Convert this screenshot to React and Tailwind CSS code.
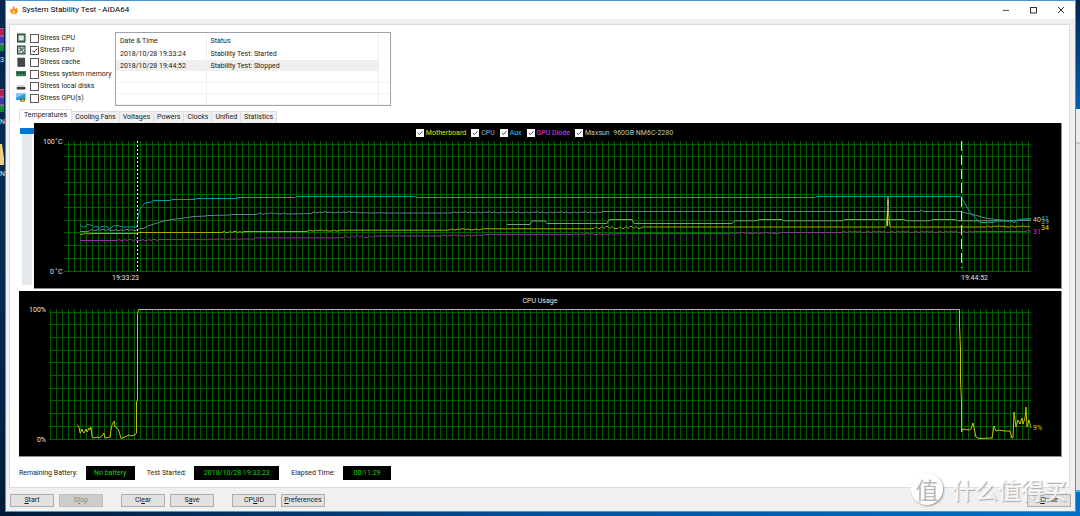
import React from "react";

const STRESS_ITEMS = [
  { id: "cpu", label: "Stress CPU", icon: "chip" },
  { id: "fpu", label: "Stress FPU", icon: "fpu", checked: true },
  { id: "cache", label: "Stress cache", icon: "cache" },
  { id: "memory", label: "Stress system memory", icon: "memory" },
  { id: "disks", label: "Stress local disks", icon: "disk" },
  { id: "gpu", label: "Stress GPU(s)", icon: "gpu" },
];

const LOG = [
  ["2018/10/28 19:33:24", "Stability Test: Started"],
  ["2018/10/28 19:44:52", "Stability Test: Stopped"],
];

const TABS = ["Temperatures", "Cooling Fans", "Voltages", "Powers", "Clocks", "Unified", "Statistics"];

const SENSORS = [
  { id: "mb", label: "Motherboard", color: "text-[#e0e000]" },
  { id: "cpu", label: "CPU", color: "text-[#9fb3cd]" },
  { id: "aux", label: "Aux", color: "text-[#00dce4]" },
  { id: "gpu", label: "GPU Diode", color: "text-[#e838e8]" },
  { id: "ssd", label: "Maxsun  960GB NM6C-2280", color: "text-[#b9c8b4]" },
];

const PATTERN = [0, 1, 0, 0, 1, 0, 1, 1, 0, 1, 0, 0];

function wobble(from, to, y, amp = 1) {
  const points = [];
  for (let x = from, i = 0; x <= to; x += 2, i += 1) {
    points.push([x, y - PATTERN[i % PATTERN.length] * amp]);
  }
  return points;
}

const AUX = [
  [80, 225], [83, 227], [85, 227], [87, 224.5], [91, 225], [94, 227], [98, 226.5], [99, 229], [101, 226.5], [108, 227],
  [110, 229.5], [113, 226], [118, 225.5], [122, 227], [137, 227], [138, 217], [140, 209], [145, 203], [152, 202], [153, 200.5],
  [170, 200.5], [172, 199.5], [195, 199.5], [197, 198.5], [236, 198.5], [238, 197.5], [295, 197.5], [296, 196.5], [415, 196.5],
  [416, 197.5], [815, 197.5], [816, 196.5], [961, 196.5], [964, 202], [968, 209], [971, 214], [975, 217], [978, 221], [980, 222.5],
  [994, 222.5], [996, 221], [1012, 221], [1014, 223], [1017, 220], [1024, 219], [1031, 218.5],
];

const CPU = [
  [80, 231.5], [88, 231.5], ...wobble(90, 137, 230.5), [140, 228.5], [143, 228.5], [148, 226], [154, 224], [162, 221.5], [172, 219.5],
  [184, 218], [194, 216.5], [206, 216], [208, 215.5], [230, 215], [232, 214.5], [256, 214.5], ...wobble(258, 288, 214),
  [312, 213.5], ...wobble(312, 357, 212.8), [380, 213], [381, 212], [382, 213], [451, 213], ...wobble(452, 600, 212.8), [602, 211.5],
  [920, 211.5], [921, 210], [923, 211.5], [961, 211.5], [966, 213], [975, 215], [985, 218], [996, 219.5], [1008, 220.5], [1031, 220.5],
];

const MOTHERBOARD = [
  [80, 234.5], [84, 234], [86, 233], [88, 234], [91, 233.5], [137, 233.5], [139, 232.5], [220, 232.5], ...wobble(222, 242, 232.5),
  [244, 231.5], [306, 231.5], ...wobble(308, 338, 231), [340, 230.2], [448, 230.2], ...wobble(450, 482, 229.8), [484, 228.8],
  [592, 228.8], ...wobble(594, 640, 228.5, 2), [642, 227], [886, 227], [888, 208], [890, 227], [984, 227], ...wobble(986, 1031, 227),
];

const GPU = [
  [80, 240.5], [115, 240.5], ...wobble(117, 160, 240.5), [162, 239.5], [254, 239], [256, 237.8], [342, 237.8], ...wobble(344, 372, 237.6, 2),
  [374, 236], [440, 236], ...wobble(442, 482, 236), [484, 234.6], [572, 234.6], ...wobble(574, 616, 234.5), [618, 233.6], [728, 233.6],
  ...wobble(730, 778, 233.6), [780, 232.6], [840, 232.6], ...wobble(842, 976, 232.3), [978, 231.5], [1025, 231.5], [1028, 230.5], [1031, 231.5],
];

const MAXSUN = [
  [507, 224.5], [530, 224.5], [532, 221], [545, 221], [547, 223.5], [607, 223.5], [609, 219.5], [632, 219.5], [634, 223.5],
  [732, 223.5], [735, 220.8], [757, 220.8], [759, 219.5], [782, 219.5], [784, 220.8], [842, 220.8], [845, 219.5], [904, 219.5],
  [907, 220.8], [930, 220.8], [932, 219.5], [955, 219.5], [958, 220.8], [1017, 220.8], [1020, 220], [1031, 220],
];

const USAGE = [
  [77, 424.5], [79, 427], [80, 433], [81, 432], [82, 429], [83, 432], [84, 433], [86, 429], [87, 432], [89, 428], [90, 430], [91, 427],
  [92, 437], [94, 438], [98, 437], [99, 438], [102, 436], [104, 433], [105, 438], [110, 437], [111, 430], [112, 425], [114, 421],
  [115, 427], [117, 427.5], [119, 431], [121, 438.5], [125, 437], [129, 435], [131, 436], [135, 435], [136.5, 433], [136.5, 402],
  [137.5, 400], [137.5, 314], [138.5, 309.5], [959.5, 309.5], [959.5, 325], [960.5, 350], [960.5, 380], [961.5, 402], [961.5, 432],
  [963, 429], [969, 430], [971, 429], [973, 423], [976, 437], [979, 438.5], [992, 438], [994, 426], [996, 431], [999, 430], [1004, 431],
  [1010, 431], [1012, 438], [1013, 438], [1014, 412], [1016, 427], [1018, 420], [1020, 424], [1022, 418], [1023, 424], [1025, 418],
  [1026, 407], [1027, 427], [1029, 420], [1031, 428],
];

const toPoints = (points) => points.map((p) => p.join(",")).join(" ");

function Trace({ points, color }) {
  return <polyline points={toPoints(points)} fill="none" stroke={color} strokeWidth="1" />;
}

function Grid({ left, right, top, bottom, firstColumn, firstRow }) {
  const columns = [];
  for (let x = firstColumn; x <= right; x += 6) {
    columns.push(<line key={x} x1={x + 0.5} x2={x + 0.5} y1={top} y2={bottom} />);
  }
  const rows = [];
  const step = (bottom - 1 - firstRow) / 10;
  for (let i = 0; i <= 10; i += 1) {
    const y = Math.floor(firstRow + step * i) + 0.5;
    rows.push(<line key={i} x1={left} x2={right} y1={y} y2={y} />);
  }
  return (
    <g strokeWidth="1" shapeRendering="crispEdges">
      <g stroke="#005e00">{columns}</g>
      <g stroke="#006000">{rows}</g>
    </g>
  );
}

const chartText = "font-[Roboto,'Open_Sans',sans-serif] text-[7px]";

function TemperatureChart() {
  return (
    <svg viewBox="34 138 1027 150" className={"block w-full overflow-visible " + chartText} role="img" aria-label="Temperature history">
      <Grid left={64} right={1031} top={141} bottom={272} firstColumn={68} firstRow={144} />
      <Trace points={GPU} color="#96309a" />
      <Trace points={MAXSUN} color="#7f9c7a" />
      <Trace points={CPU} color="#6a7e98" />
      <Trace points={MOTHERBOARD} color="#acac00" />
      <Trace points={AUX} color="#009ca2" />
      <path d="M888 197V213" stroke="#a8a8b8" strokeWidth="1.4" />
      <path d="M888 200V206M887.5 211V226" stroke="#d0d040" strokeWidth="1.2" />
      <path d="M137.5 141V271" stroke="#ffffff" strokeDasharray="2 2" />
      <path d="M961.5 141V268" stroke="#d8d8d8" strokeDasharray="10 4" />
      <g fill="#e4e4e4">
        <text x="43" y="144">100</text>
        <text x="55" y="143">°</text>
        <text x="58" y="144">C</text>
        <text x="50" y="274">0</text>
        <text x="55" y="273">°</text>
        <text x="58" y="274">C</text>
        <text x="112" y="280">19:33:23</text>
        <text x="961" y="280">19:44:52</text>
        <text x="1033" y="222" fill="#c4d0c0">40</text>
        <text x="1041" y="224" fill="#8fa3bd">39</text>
        <text x="1041" y="221" fill="#00c4cc">41</text>
        <text x="1041" y="230" fill="#e0e000">34</text>
        <text x="1033" y="234" fill="#d838d8">31</text>
      </g>
    </svg>
  );
}

function UsageChart() {
  return (
    <svg viewBox="19 306 1042 150" className={"block w-full " + chartText} role="img" aria-label="CPU usage history">
      <Grid left={49} right={1031} top={309} bottom={440} firstColumn={50} firstRow={312} />
      <Trace points={USAGE} color="#c4c400" />
      <text x="46" y="312" textAnchor="end" fill="#e4e4e4">100%</text>
      <text x="46" y="442" textAnchor="end" fill="#e4e4e4">0%</text>
      <text x="1033" y="430" fill="#d8d800">9%</text>
    </svg>
  );
}

function CheckBox({ id, checked, small }) {
  return (
    <span className={small ? "relative block h-[8px] w-[8px]" : "relative block h-[9px] w-[9px]"}>
      <input
        id={id}
        type="checkbox"
        defaultChecked={checked}
        className={
          small
            ? "peer block h-[8px] w-[8px] appearance-none bg-white"
            : "peer block h-[9px] w-[9px] appearance-none border border-[#5a5a5a] bg-white"
        }
      />
      <svg
        viewBox="0 0 9 9"
        className="pointer-events-none absolute inset-0 hidden h-full w-full peer-checked:block"
        fill="none"
        stroke="#333"
      >
        <path d="M2 4.5L3.8 6.3L7.2 2.6" />
      </svg>
    </span>
  );
}

function StressIcon({ name }) {
  return (
    <svg viewBox="0 0 10 10" className="h-[10px] w-[10px] shrink-0">
      {name === "chip" && (
        <>
          <rect x="1" y="0.5" width="8.5" height="9" fill="#1d4f35" />
          <rect x="2.5" y="2.2" width="5.5" height="5.5" fill="#e4ece6" stroke="#7f9a88" strokeWidth="0.8" />
        </>
      )}
      {name === "fpu" && (
        <>
          <rect x="1" y="0.5" width="8.5" height="9" fill="#2a4a3c" />
          <rect x="2.2" y="1.8" width="6.2" height="6.4" fill="#c8d4cc" />
          <path d="M3 3h2v2h2M6 3.2h1.8M3.2 6.5l2-1.5M6 7.2h2" stroke="#2a4a3c" fill="none" strokeWidth="0.9" />
        </>
      )}
      {name === "cache" && (
        <>
          <rect x="1.5" y="0.8" width="7.5" height="9" fill="#3a3e40" />
          <path d="M1 2.2h8.4M1 4h8.4M1 5.8h8.4M1 7.6h8.4" stroke="#5a6062" strokeWidth="0.6" />
          <path d="M3.4 0v1.5M7 0v1.5" stroke="#8a8e90" />
        </>
      )}
      {name === "memory" && (
        <>
          <rect x="0" y="2" width="10" height="5" fill="#2f7d50" />
          <path d="M1.5 3h1.5v2H1.5zM4.2 3h1.5v2H4.2zM7 3h1.5v2H7z" fill="#174028" />
          <path d="M0.5 7.4h9" stroke="#9fc0a8" strokeWidth="0.8" strokeDasharray="1 0.5" />
        </>
      )}
      {name === "disk" && (
        <>
          <path d="M2 4h6l1.5 2.5h-9z" fill="#d4d4d4" />
          <rect x="0.8" y="6" width="8.6" height="2.4" rx="0.5" fill="#3c3c3c" />
        </>
      )}
      {name === "gpu" && (
        <>
          <rect x="0" y="0.5" width="9.5" height="6.5" fill="#2f9be0" />
          <path d="M0 0.5h9.5L0 5z" fill="#7cc8f4" />
          <rect x="4" y="5.4" width="5" height="3" fill="#3c7a4a" />
          <circle cx="6.8" cy="7.6" r="1.6" fill="#d8a020" />
        </>
      )}
    </svg>
  );
}

function Readout({ label, value, className }) {
  return (
    <div className="flex items-center gap-[8px]">
      <span>{label}</span>
      <output className={"flex h-[14px] items-center justify-center bg-black text-[#00dc00] " + className}>{value}</output>
    </div>
  );
}

function Button({ before = "", hot, after = "", disabled }) {
  return (
    <button
      type="button"
      disabled={disabled}
      className="flex h-[13px] w-[44px] items-center justify-center border border-[#adadad] bg-[#e1e1e1] whitespace-pre disabled:border-[#bfbfbf] disabled:bg-[#cccccc] disabled:text-[#8a8a8a]"
    >
      {before}
      <span className="underline underline-offset-1">{hot}</span>
      {after}
    </button>
  );
}

function TitleBar() {
  return (
    <header className="flex h-[18px] items-center justify-between bg-white pr-[10px] pl-[4px]">
      <div className="flex items-center gap-[4px]">
        <svg viewBox="0 0 9 10" className="h-[10px] w-[8px]">
          <path d="M4.2 0C5 2 5.4 3 5.6 4.2C6.6 3.6 7 3 7.2 2.2C8.6 4 9 5.6 8.2 7.4C7.4 9.2 5.8 10 4.2 9.8C2 9.6 0.2 8 0.2 5.6C0.2 4.6 0.4 4 0.8 3.2C1.4 4 1.8 4.4 2.6 4.6C2.8 3 3.4 1.6 4.2 0Z" fill="#f58a1f" />
          <path d="M4.4 4.6C5 6 6.4 6.4 6 8C5.6 9.2 3.2 9.4 2.6 8C2.2 7 3.6 6 4.4 4.6Z" fill="#ffd54a" />
        </svg>
        <h1 className="text-[8px] leading-[12px] text-black">System Stability Test - AIDA64</h1>
      </div>
      <div className="flex items-center gap-[20px]">
        <button type="button" aria-label="Minimize">
          <svg viewBox="0 0 8 8" className="h-[8px] w-[7px]" stroke="#333" fill="none">
            <path d="M1 4.5h7" />
          </svg>
        </button>
        <button type="button" aria-label="Maximize">
          <svg viewBox="0 0 8 8" className="h-[8px] w-[8px]" stroke="#333" fill="none">
            <rect x="1.5" y="1.5" width="6" height="5.5" />
          </svg>
        </button>
        <button type="button" aria-label="Close window">
          <svg viewBox="0 0 8 8" className="h-[8px] w-[8px]" stroke="#333" fill="none">
            <path d="M1 1L7 7M7 1L1 7" />
          </svg>
        </button>
      </div>
    </header>
  );
}

function EventLog() {
  const cell = "border-r border-[#efefef] px-[4px] text-left font-normal";
  return (
    <div className="w-[276px] border border-[#a0a4aa] bg-white">
      <table className="w-full table-fixed border-collapse">
        <colgroup>
          <col className="w-[90px]" />
          <col />
          <col className="w-[12px]" />
        </colgroup>
        <thead>
          <tr className="h-[15px]">
            <th className={cell}>Date &amp; Time</th>
            <th className={cell}>Status</th>
            <td />
          </tr>
        </thead>
        <tbody>
          {LOG.map(([time, status], i) => (
            <tr key={time} className={i === 1 ? "h-[11px] bg-[#efefef]" : "h-[12px]"}>
              <td className={cell}>{time}</td>
              <td className={cell}>{status}</td>
              <td className={i === 1 ? "bg-white" : ""} />
            </tr>
          ))}
          {[0, 1, 2].map((i) => (
            <tr key={i} className="h-[11px] border-b border-[#f3f3f3]">
              <td className={cell} />
              <td className={cell} />
              <td />
            </tr>
          ))}
        </tbody>
      </table>
    </div>
  );
}

function DesktopArchive() {
  return (
    <svg viewBox="0 0 5 24" className="h-[24px] w-[5px]">
      <rect y="0" width="4" height="8" fill="#b02050" />
      <rect y="8" width="4" height="8" fill="#4038b0" />
      <rect y="16" width="4" height="7" fill="#108a30" />
      <path d="M0 0h4M0 8h4M0 16h4" stroke="#e8a0c0" strokeWidth="0.7" />
    </svg>
  );
}

export default function App() {
  return (
    <div className="relative flex min-h-screen flex-col bg-linear-to-r from-[#021a38] via-[#04509c] to-[#0070c8] font-[Roboto,'Open_Sans',sans-serif] text-[7px] leading-[10px] text-[#1a1a1a]">
      <div className="flex">
        <aside className="w-[5px] shrink-0 overflow-hidden bg-linear-to-b from-[#04264f] via-[#062c54] to-[#021a38] pt-[28px] text-[#dfe6ee]">
          <DesktopArchive />
          <p className="pt-[3px] pb-[24px]">3</p>
          <DesktopArchive />
          <p className="pt-[4px] pb-[17px]">N</p>
          <svg viewBox="0 0 5 22" className="h-[22px] w-[5px]">
            <path d="M0 0h2l2 14v7H0z" fill="#f0d080" />
          </svg>
          <p className="pt-[3px]">N</p>
        </aside>

        <main className="min-w-0 grow border border-[#4a94d6] bg-[#f0f0f0]">
          <TitleBar />
          <section className="mt-[5px] mr-[5px] ml-[3px] border border-[#dcdcdc] bg-white pb-[7px]">
            <div className="flex items-start gap-[4px] pt-[7px] pl-[6px]">
              <ul className="w-[95px] shrink-0 whitespace-nowrap">
                {STRESS_ITEMS.map((item) => (
                  <li key={item.id} className="flex h-[12px] items-center">
                    <StressIcon name={item.icon} />
                    <label htmlFor={"stress-" + item.id} className="ml-[4px] flex items-center gap-[1px]">
                      <CheckBox id={"stress-" + item.id} checked={item.checked} />
                      {item.label}
                    </label>
                  </li>
                ))}
              </ul>
              <EventLog />
            </div>

            <div role="tablist" className="mt-[3px] flex items-end pl-[9px]">
              {TABS.map((tab, i) => (
                <button
                  key={tab}
                  type="button"
                  role="tab"
                  aria-selected={i === 0}
                  className={
                    i === 0
                      ? "h-[14px] border-x border-t border-[#e0e0e0] bg-white px-[4px] pb-[3px]"
                      : "h-[12px] border-t border-r border-[#dcdcdc] bg-[#f0f0f0] px-[3px]"
                  }
                >
                  {tab}
                </button>
              ))}
            </div>

            <div className="mr-[7px] ml-[9px] flex">
              <div className="flex w-[15px] shrink-0 flex-col pt-[5px] pb-[4px]">
                <div className="ml-[1px] h-[6px] bg-[#0078d7]" />
                <div className="mr-[2px] ml-[3px] grow bg-[#e4e8ea]" />
              </div>
              <div className="min-w-0 grow border-r border-b border-[#8c8c8c] bg-black">
                <div className="flex h-[15px] items-end justify-center gap-[5px] pr-[6px]">
                  {SENSORS.map((sensor) => (
                    <label key={sensor.id} htmlFor={"sensor-" + sensor.id} className={"flex items-center gap-[2px] whitespace-pre " + sensor.color}>
                      <CheckBox id={"sensor-" + sensor.id} checked small />
                      {sensor.label}
                    </label>
                  ))}
                </div>
                <TemperatureChart />
              </div>
            </div>

            <figure className="mt-[2px] mr-[7px] ml-[9px] border-r border-b border-[#8c8c8c] bg-black">
              <figcaption className="flex h-[15px] items-end justify-center text-[#e8e8e8]">CPU Usage</figcaption>
              <UsageChart />
            </figure>

            <div className="mt-[9px] flex gap-[12px] pl-[9px]">
              <Readout label="Remaining Battery:" value="No battery" className="w-[49px]" />
              <Readout label="Test Started:" value="2018/10/28 19:33:23" className="w-[85px]" />
              <Readout label="Elapsed Time:" value="00:11:29" className="w-[48px]" />
            </div>
          </section>

          <footer className="flex items-center justify-between px-[4px] pt-[6px] pb-[4px]">
            <div className="flex gap-[18px]">
              <div className="flex gap-[5px]">
                <Button hot="S" after="tart" />
                <Button before="S" hot="t" after="op" disabled />
              </div>
              <div className="flex gap-[5px]">
                <Button before="Cl" hot="e" after="ar" />
                <Button before="S" hot="a" after="ve" />
              </div>
              <div className="flex gap-[5px]">
                <Button before="CP" hot="U" after="ID" />
                <Button hot="P" after="references" />
              </div>
            </div>
            <Button hot="C" after="lose" />
          </footer>
        </main>

        <aside className="flex w-[4px] shrink-0 flex-col">
          <div className="h-[109px] bg-linear-to-b from-[#03264f] to-[#0060b4]" />
          <div className="h-[34px] border-b border-[#c8c8c8] bg-[#ececec]" />
          <div className="grow border-t border-[#c8c8c8] bg-[#e2e2e2]" />
          <div className="h-[22px] border-t-2 border-[#50b0d8] bg-[#0070c8]" />
        </aside>
      </div>

      <div className="pointer-events-none absolute right-[13px] bottom-[11px] flex items-center gap-[9px] font-['Noto_Sans_CJK_SC',sans-serif] text-white/80">
        <span className="flex h-[32px] w-[32px] items-center justify-center rounded-full bg-white text-[23px] leading-[32px] text-[#b8b8b8] shadow-[1px_1px_2px_#999]">
          值
        </span>
        <span className="text-[23px] leading-[32px] font-medium [text-shadow:1px_1px_1px_#aaa]">什么值得买</span>
      </div>
    </div>
  );
}
